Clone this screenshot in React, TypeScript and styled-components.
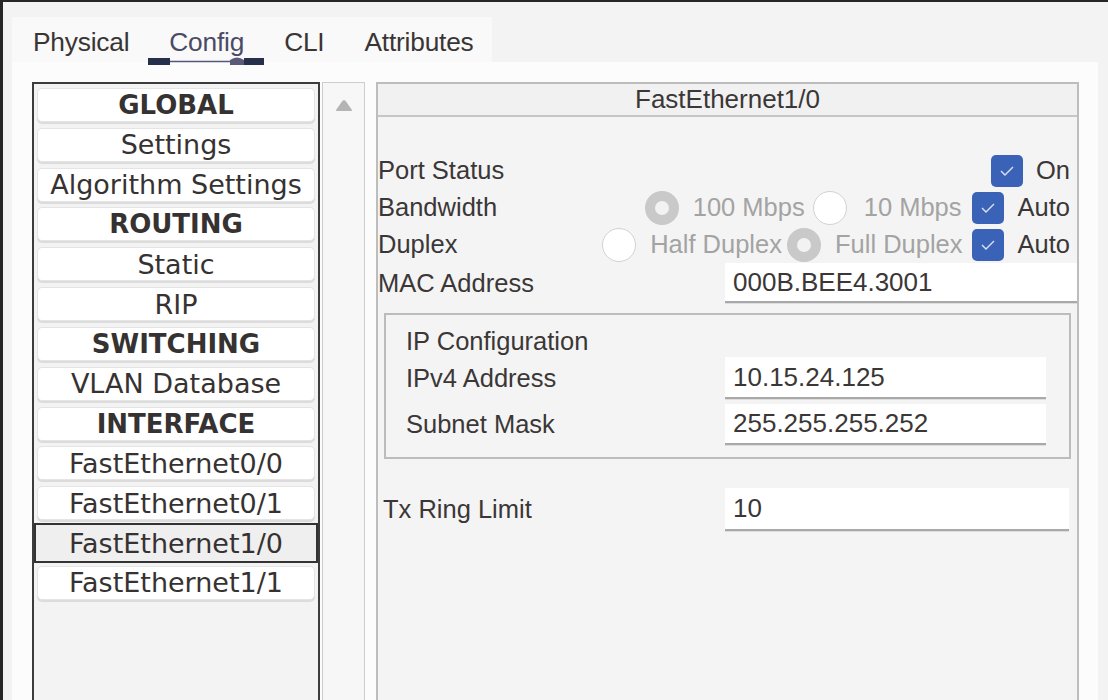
import React from "react";
import styled, { createGlobalStyle } from "styled-components";

const Global = createGlobalStyle`
  html, body { margin: 0; padding: 0; background: #f3f3f3; }
  * { box-sizing: border-box; }
`;

const Frame = styled.div`
  width: 1108px;
  height: 700px;
  overflow: hidden;
  background: #f3f3f3;
  border-top: 2px solid #262626;
  border-left: 3px solid #262626;
  padding: 15px 10px 0 9px;
  display: flex;
  flex-direction: column;
`;

const TabStrip = styled.div`
  flex: none;
  width: 480px;
  height: 45px;
  background: #f9f9f9;
  display: flex;
  align-items: center;
  gap: 40px;
  padding: 5px 0 0 21px;
  font-family: "Liberation Sans", Arial, sans-serif;
  font-size: 26.3px;
`;

const Tab = styled.div<{ $active?: boolean }>`
  position: relative;
  color: ${(p) => (p.$active ? "#4b4a66" : "#3a3535")};
  letter-spacing: -0.2px;
`;

const TabMark = styled.svg`
  position: absolute;
  left: -21px;
  top: 29px;
`;

const Body = styled.div`
  flex: 1;
  min-height: 0;
  overflow: hidden;
  background: #fcfcfc;
  display: flex;
  align-items: flex-start;
  padding: 20px 19px 0 20px;
`;

const NavList = styled.div`
  flex: none;
  width: 288px;
  height: 640px;
  border: 2px solid #3c3c3c;
  background: #f3f3f3;
  padding: 4px 3px;
  display: flex;
  flex-direction: column;
  gap: 5.83px;
  font-family: "DejaVu Sans", Verdana, sans-serif;
  font-size: 27px;
  color: #363232;
`;

const NavItem = styled.div<{ $bold?: boolean; $selected?: boolean }>`
  flex: none;
  height: ${(p) => (p.$selected ? "40px" : "34px")};
  margin: ${(p) => (p.$selected ? "-3px -3px" : "0")};
  display: flex;
  align-items: center;
  justify-content: center;
  font-weight: ${(p) => (p.$bold ? 700 : 400)};
  font-size: ${(p) => (p.$bold ? "26px" : "inherit")};
  background: ${(p) => (p.$selected ? "#efefef" : "#ffffff")};
  border: ${(p) => (p.$selected ? "2px solid #333" : "1px solid #e4e4e4")};
  border-radius: ${(p) => (p.$selected ? "0" : "5px")};
  box-shadow: ${(p) => (p.$selected ? "none" : "0 2px 0 #dcdcdc")};
  white-space: nowrap;
`;

const ScrollCol = styled.div`
  flex: none;
  width: 43px;
  height: 640px;
  margin-left: 2px;
  border: 1px solid #cdcdcd;
  background: #f7f7f7;
  display: flex;
  justify-content: center;
  align-items: flex-start;
  padding-top: 16px;
`;

const Panel = styled.div`
  flex: none;
  width: 703px;
  height: 640px;
  margin-left: 11px;
  border: 2px solid #bdbdbd;
  background: #f4f4f4;
  display: flex;
  flex-direction: column;
  font-family: "Liberation Sans", Arial, sans-serif;
  font-size: 25.5px;
  color: #3b3737;
`;

const PanelHeader = styled.div`
  flex: none;
  height: 33px;
  border-bottom: 2px solid #c6c6c6;
  background: #f1f1f1;
  display: flex;
  align-items: center;
  justify-content: center;
  font-size: 26px;
`;

const PanelContent = styled.div`
  display: flex;
  flex-direction: column;
  padding-top: 35px;
`;

const CtrlRow = styled.div`
  flex: none;
  height: 37px;
  display: flex;
  align-items: center;
  padding-right: 7px;
`;

const RowLabel = styled.div`
  flex: 1;
  white-space: nowrap;
`;

const Controls = styled.div`
  display: flex;
  align-items: center;
`;

const Option = styled.div<{ $gap?: number; $ml?: number }>`
  display: flex;
  align-items: center;
  gap: ${(p) => p.$gap ?? 14}px;
  margin-left: ${(p) => p.$ml ?? 0}px;
  white-space: nowrap;
`;

const Muted = styled.span`
  color: #a3a3a3;
`;

const Radio = styled.span<{ $checked?: boolean }>`
  width: 34px;
  height: 34px;
  border-radius: 50%;
  flex: none;
  background: ${(p) => (p.$checked ? "#f2f2f2" : "#ffffff")};
  border: ${(p) => (p.$checked ? "10px solid #c9c9c9" : "1.5px solid #d2d2d2")};
`;

const Check = styled.span`
  width: 32px;
  height: 32px;
  border-radius: 5px;
  background: #3a63b7;
  flex: none;
  display: flex;
  align-items: center;
  justify-content: center;
`;

const FieldRow = styled.div<{ $h: number; $pl: number; $pr: number; $mt?: number }>`
  flex: none;
  height: ${(p) => p.$h}px;
  display: flex;
  align-items: center;
  padding-left: ${(p) => p.$pl}px;
  padding-right: ${(p) => p.$pr}px;
  margin-top: ${(p) => p.$mt ?? 0}px;
`;

const Input = styled.div<{ $w: number }>`
  width: ${(p) => p.$w}px;
  height: 100%;
  flex: none;
  background: #ffffff;
  border-bottom: 2px solid #a9a9a9;
  box-shadow: 0 1px 0 #dddddd;
  display: flex;
  align-items: center;
  padding-left: 8px;
  font-size: 26px;
`;

const Group = styled.div`
  flex: none;
  margin: 10px 6px 0 6px;
  height: 146px;
  border: 2px solid #bcbcbc;
  padding: 10px 0 0 0;
  display: flex;
  flex-direction: column;
`;

const GroupTitle = styled.div`
  flex: none;
  height: 32px;
  display: flex;
  align-items: center;
  padding-left: 20px;
`;

const CheckMark = () => (
  <svg width="16" height="12" viewBox="0 0 16 12">
    <path d="M2 6 L6 10 L14 2" fill="none" stroke="#dbe3f4" strokeWidth="1.4" />
  </svg>
);

const navItems: { t: string; b?: boolean; s?: boolean }[] = [
  { t: "GLOBAL", b: true },
  { t: "Settings" },
  { t: "Algorithm Settings" },
  { t: "ROUTING", b: true },
  { t: "Static" },
  { t: "RIP" },
  { t: "SWITCHING", b: true },
  { t: "VLAN Database" },
  { t: "INTERFACE", b: true },
  { t: "FastEthernet0/0" },
  { t: "FastEthernet0/1" },
  { t: "FastEthernet1/0", s: true },
  { t: "FastEthernet1/1" },
];

export default function App() {
  return (
    <>
      <Global />
      <Frame>
        <TabStrip>
          <Tab>Physical</Tab>
          <Tab $active>
            Config
            <TabMark width="118" height="10" viewBox="0 0 118 10">
              <rect x="0" y="2" width="22" height="7" fill="#26304a" />
              <line x1="22" y1="5.5" x2="97" y2="5.5" stroke="#55577a" strokeWidth="1.3" />
              <path d="M82 9 L82 4 Q89 -1 96 4 L96 9 Z" fill="#5b5a78" />
              <rect x="96" y="2" width="20" height="7" fill="#26304a" />
            </TabMark>
          </Tab>
          <Tab>CLI</Tab>
          <Tab>Attributes</Tab>
        </TabStrip>
        <Body>
          <NavList>
            {navItems.map((n) => (
              <NavItem key={n.t} $bold={n.b} $selected={n.s}>
                {n.t}
              </NavItem>
            ))}
          </NavList>
          <ScrollCol>
            <svg width="18" height="13" viewBox="0 0 18 13">
              <path d="M9 1 Q10 1 11 2.5 L17 11 Q17.5 12 16 12 L2 12 Q0.5 12 1 11 L7 2.5 Q8 1 9 1 Z" fill="#b4b4b4" />
            </svg>
          </ScrollCol>
          <Panel>
            <PanelHeader>FastEthernet1/0</PanelHeader>
            <PanelContent>
              <CtrlRow>
                <RowLabel>Port Status</RowLabel>
                <Controls>
                  <Option $gap={13}>
                    <Check>
                      <CheckMark />
                    </Check>
                    On
                  </Option>
                </Controls>
              </CtrlRow>
              <CtrlRow>
                <RowLabel>Bandwidth</RowLabel>
                <Controls>
                  <Option>
                    <Radio $checked />
                    <Muted>100 Mbps</Muted>
                  </Option>
                  <Option $gap={17} $ml={8}>
                    <Radio />
                    <Muted>10 Mbps</Muted>
                  </Option>
                  <Option $ml={10}>
                    <Check>
                      <CheckMark />
                    </Check>
                    Auto
                  </Option>
                </Controls>
              </CtrlRow>
              <CtrlRow>
                <RowLabel>Duplex</RowLabel>
                <Controls>
                  <Option>
                    <Radio />
                    <Muted>Half Duplex</Muted>
                  </Option>
                  <Option $ml={5}>
                    <Radio $checked />
                    <Muted>Full Duplex</Muted>
                  </Option>
                  <Option $ml={9}>
                    <Check>
                      <CheckMark />
                    </Check>
                    Auto
                  </Option>
                </Controls>
              </CtrlRow>
              <FieldRow $h={40} $pl={0} $pr={0}>
                <RowLabel>MAC Address</RowLabel>
                <Input $w={352}>000B.BEE4.3001</Input>
              </FieldRow>
              <Group>
                <GroupTitle>IP Configuration</GroupTitle>
                <FieldRow $h={42} $pl={20} $pr={23}>
                  <RowLabel>IPv4 Address</RowLabel>
                  <Input $w={321}>10.15.24.125</Input>
                </FieldRow>
                <FieldRow $h={41} $pl={20} $pr={23} $mt={5}>
                  <RowLabel>Subnet Mask</RowLabel>
                  <Input $w={321}>255.255.255.252</Input>
                </FieldRow>
              </Group>
              <FieldRow $h={43} $pl={5} $pr={8} $mt={29}>
                <RowLabel>Tx Ring Limit</RowLabel>
                <Input $w={344}>10</Input>
              </FieldRow>
            </PanelContent>
          </Panel>
        </Body>
      </Frame>
    </>
  );
}
